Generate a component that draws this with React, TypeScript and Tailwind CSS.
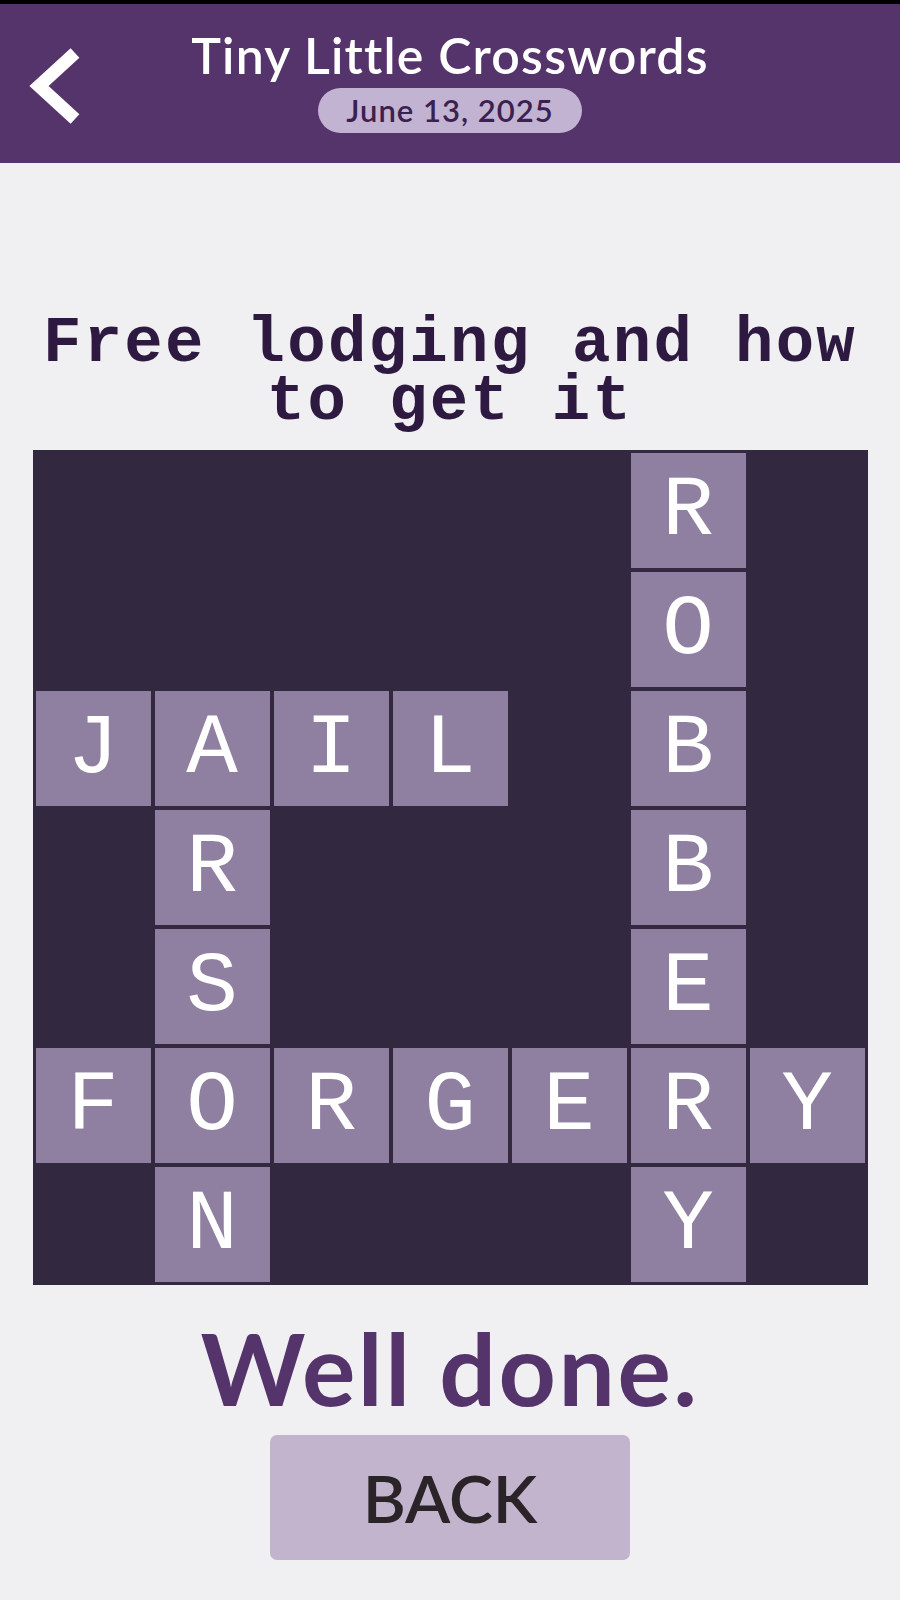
import React from 'react';

type Cell = string | null;

// 7x7 solution grid, null = blocked square
const GRID: Cell[][] = [
  [null, null, null, null, null, 'R', null],
  [null, null, null, null, null, 'O', null],
  ['J', 'A', 'I', 'L', null, 'B', null],
  [null, 'R', null, null, null, 'B', null],
  [null, 'S', null, null, null, 'E', null],
  ['F', 'O', 'R', 'G', 'E', 'R', 'Y'],
  [null, 'N', null, null, null, 'Y', null],
];

const sans = "font-['Lato','Noto_Sans',sans-serif]";
const mono = "font-['Liberation_Mono','DejaVu_Sans_Mono',monospace]";

function BackChevron() {
  return (
    <svg width="60" height="84" viewBox="0 0 60 84" aria-hidden="true">
      <polyline
        points="51,7 15,40 51,73"
        fill="none"
        stroke="white"
        strokeWidth={13}
        strokeLinecap="butt"
        strokeLinejoin="miter"
      />
    </svg>
  );
}

function Header() {
  return (
    <header className="relative h-[159px] bg-[#55336b]">
      <button className="absolute left-[24px] top-[42px]" aria-label="Back">
        <BackChevron />
      </button>
      <div className="flex flex-col items-center pt-[22px]">
        <h1 className={`${sans} text-[50px] font-semibold leading-[58px] tracking-[1.2px] text-white`}>
          Tiny Little Crosswords
        </h1>
        <div className="mt-[4px] flex h-[45px] w-[264px] items-center justify-center rounded-full bg-[#c1b3d1]">
          <span className={`${sans} text-[31px] font-semibold tracking-[1px] text-[#3a2150]`}>
            June 13, 2025
          </span>
        </div>
      </div>
    </header>
  );
}

function Board() {
  return (
    <div className="grid w-[835px] grid-cols-7 gap-[4px] bg-[#32283f] p-[3px]">
      {GRID.flat().map((ch, i) =>
        ch ? (
          <div
            key={i}
            className={`${mono} flex aspect-square items-center justify-center bg-[#8f7fa0] text-[86px] leading-none text-white`}
          >
            {ch}
          </div>
        ) : (
          <div key={i} className="aspect-square" />
        )
      )}
    </div>
  );
}

export default function App() {
  return (
    <div className="flex min-h-[1600px] flex-col bg-[#f0f0f3]">
      <div className="h-[4px] bg-black" />
      <Header />
      <main className="flex flex-col items-center">
        <p
          className={`${mono} mt-[152px] max-w-[840px] text-center text-[64px] font-bold leading-[58px] tracking-[2.3px] text-[#2e1a40]`}
        >
          Free lodging and how to get it
        </p>
        <div className="mt-[19px]">
          <Board />
        </div>
        <h2
          className={`${sans} mt-[22px] text-[100px] font-bold leading-[120px] tracking-[2.5px] text-[#55336b]`}
        >
          Well done.
        </h2>
        <button className="mt-[8px] flex h-[125px] w-[360px] items-center justify-center rounded-[7px] bg-[#c2b4cd]">
          <span className={`${sans} text-[66px] font-semibold text-[#2a2328]`}>BACK</span>
        </button>
      </main>
    </div>
  );
}
